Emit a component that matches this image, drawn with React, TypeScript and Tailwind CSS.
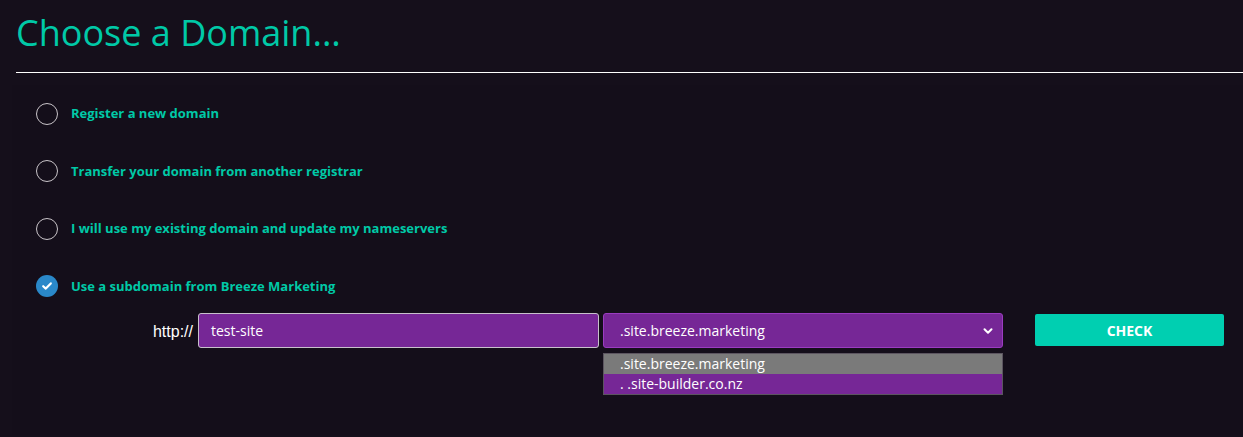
import React from 'react'

const options = [
  'Register a new domain',
  'Transfer your domain from another registrar',
  'I will use my existing domain and update my nameservers',
  'Use a subdomain from Breeze Marketing',
]

function Radio({ checked }: { checked: boolean }) {
  if (checked) {
    return (
      <span className="flex h-[22px] w-[22px] items-center justify-center rounded-full bg-[#2a88c9]">
        <svg width="12" height="12" viewBox="0 0 12 12" fill="none">
          <path d="M2.2 6.2 L4.8 8.6 L9.8 3.4" stroke="#fff" strokeWidth="2.2" strokeLinecap="round" strokeLinejoin="round" />
        </svg>
      </span>
    )
  }
  return <span className="block h-[22px] w-[22px] rounded-full border-[1.5px] border-[#c9c4c9]" />
}

export default function App() {
  return (
    <div
      className="min-h-screen w-full bg-[#150f1b] pl-4"
      style={{ fontFamily: '"Open Sans", "Noto Sans", sans-serif' }}
    >
      {/* header */}
      <h1 className="pt-[9px] text-[36px] leading-[48px] font-normal text-[#00c9a7]">Choose a Domain...</h1>
      <div className="mt-[15px] h-px bg-white" />

      {/* panel */}
      <div className="-ml-1 mt-[12px] bg-[#140e1a] pb-10">
        {options.map((label, i) => (
          <div key={label} className="flex h-[57.5px] items-center gap-[13px] pl-6">
            <Radio checked={i === 3} />
            <span className="text-[13px] font-bold text-[#00c9a7]">{label}</span>
          </div>
        ))}

        <div className="mt-[-2px] flex items-start">
          <span
            className="w-[186px] shrink-0 pt-[7px] pr-[5px] text-right text-[16px] text-white"
            style={{ fontFamily: '"Liberation Sans", Arial, sans-serif' }}
          >
            http://
          </span>
          <div className="flex h-[35px] w-[401px] shrink-0 items-center rounded-[3px] border border-[#c8c0cc] bg-[#762796] pl-3 text-[14px] text-white">
            test-site
          </div>
          <div className="ml-[4px] flex w-[400px] shrink-0 flex-col">
            <div className="flex h-[35px] items-center justify-between rounded-[3px] border border-[#9a3cc0] bg-[#762796] pl-4 pr-2 text-[14px] text-white">
              <span>.site.breeze.marketing</span>
              <svg width="12" height="12" viewBox="0 0 12 12" fill="none">
                <path d="M2.5 4.2 L6 7.7 L9.5 4.2" stroke="#fff" strokeWidth="2" strokeLinecap="round" strokeLinejoin="round" />
              </svg>
            </div>
            <div className="mt-[5px] border border-[#5c5560] text-[14px] leading-[20px] text-white">
              <div className="bg-[#7a7a7a] pl-4">.site.breeze.marketing</div>
              <div className="bg-[#762796] pl-4">. .site-builder.co.nz</div>
            </div>
          </div>
          <button className="ml-[32px] mt-px flex h-[32px] w-[189px] shrink-0 items-center justify-center rounded-[2px] bg-[#00cfb1] text-[14px] font-bold text-white">
            CHECK
          </button>
        </div>
      </div>
    </div>
  )
}
